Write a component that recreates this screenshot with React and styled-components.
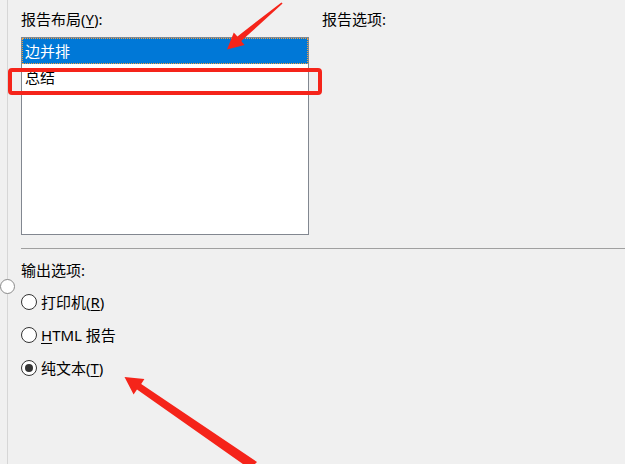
import React from 'react';
import styled, { createGlobalStyle } from 'styled-components';

const GlobalStyle = createGlobalStyle`
  html, body {
    margin: 0;
    padding: 0;
    background: #f0f0f0;
    overflow: hidden;
  }
  body {
    font-family: "Noto Sans", "Noto Sans CJK SC", sans-serif;
    font-size: 15px;
    color: #000;
  }
`;

const Page = styled.div`
  position: relative;
  width: 625px;
  height: 464px;
  overflow: hidden;
`;

const Frame = styled.div`
  margin-left: 7px;
  height: 100%;
  border-left: 1px solid #d6d6d6;
  padding: 9px 0 0 13px;
  box-sizing: border-box;
`;

const TopRow = styled.div`
  display: flex;
  gap: 13px;
`;

const Column = styled.div`
  display: flex;
  flex-direction: column;
  width: ${p => p.width || 'auto'};
`;

const Label = styled.div`
  line-height: 20px;
  height: 20px;
  white-space: nowrap;
`;

const Key = styled.span`
  text-decoration: underline;
  text-underline-offset: 2px;
`;

const ListBox = styled.div`
  margin-top: 8px;
  width: 288px;
  height: 198px;
  box-sizing: border-box;
  border: 1px solid #828790;
  background: #fff;
`;

const ListItem = styled.div`
  height: 26px;
  padding-left: 2px;
  box-sizing: border-box;
  background: ${p => (p.selected ? '#0078d7' : 'transparent')};
  color: ${p => (p.selected ? '#fff' : '#000')};
  border: 1px ${p => (p.selected ? 'dotted #f0a040' : 'solid transparent')};
  line-height: 24px;
`;

const Separator = styled.div`
  margin-top: 13px;
  height: 1px;
  background: #a0a0a0;
`;

const Section = styled.div`
  margin-top: 11px;
  display: flex;
  flex-direction: column;
`;

const RadioList = styled.div`
  display: flex;
  flex-direction: column;
  gap: 13px;
  margin-top: 12px;
`;

const RadioRow = styled.label`
  display: flex;
  align-items: center;
  gap: 4px;
  height: 20px;
  line-height: 20px;
  white-space: nowrap;
`;

const RadioDot = styled.span`
  width: 16px;
  height: 16px;
  border-radius: 50%;
  border: 1px solid #333;
  background: #fff;
  box-sizing: border-box;
  display: flex;
  align-items: center;
  justify-content: center;
  &::after {
    content: '';
    width: 8px;
    height: 8px;
    border-radius: 50%;
    background: ${p => (p.checked ? '#333' : 'transparent')};
  }
`;

const EdgeRadio = styled.span`
  position: absolute;
  left: 0;
  top: 279px;
  width: 15px;
  height: 15px;
  border-radius: 50%;
  border: 1px solid #8a8a8a;
  background: #fff;
  box-sizing: border-box;
`;

const Highlight = styled.div`
  position: absolute;
  left: 8px;
  top: 68px;
  width: 314px;
  height: 27px;
  border: 4px solid #f5241a;
  border-radius: 4px;
  box-sizing: border-box;
`;

const Overlay = styled.svg`
  position: absolute;
  left: 0;
  top: 0;
  pointer-events: none;
`;

const options = [
  { label: <>打印机(<Key>R</Key>)</>, checked: false },
  { label: <><Key>H</Key>TML 报告</>, checked: false },
  { label: <>纯文本(<Key>T</Key>)</>, checked: true },
];

const App = () => (
  <>
    <GlobalStyle />
    <Page>
      <Frame>
        <TopRow>
          <Column width="288px">
            <Label>报告布局(<Key>Y</Key>):</Label>
            <ListBox>
              <ListItem selected>边并排</ListItem>
              <ListItem>总结</ListItem>
            </ListBox>
          </Column>
          <Column>
            <Label>报告选项:</Label>
          </Column>
        </TopRow>
        <Separator />
        <Section>
          <Label>输出选项:</Label>
          <RadioList>
            {options.map((o, i) => (
              <RadioRow key={i}>
                <RadioDot checked={o.checked} />
                <span>{o.label}</span>
              </RadioRow>
            ))}
          </RadioList>
        </Section>
      </Frame>
      <EdgeRadio />
      <Highlight />
      <Overlay width="625" height="464" viewBox="0 0 625 464">
        <polygon
          fill="#f5241a"
          points="282.6,3.6 241.2,41 244.6,45 227,49.5 233.8,32.4 237.4,36.4 281.4,2.4"
        />
        <polygon
          fill="#f5241a"
          points="257,462 141.2,384 144.4,379 124.5,377 133.6,394.4 137,389.6 250,469"
        />
      </Overlay>
    </Page>
  </>
);

export default App;
